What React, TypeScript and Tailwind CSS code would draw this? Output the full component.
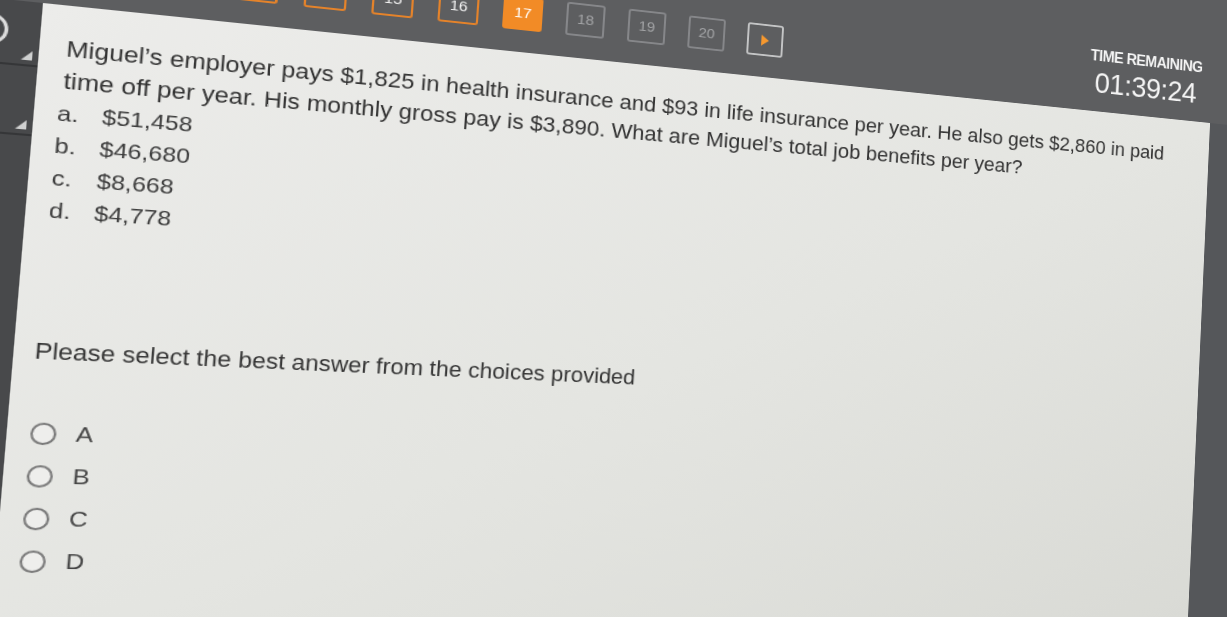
import { useMemo } from "react";

type Pt = [number, number];

// solve a small linear system (gaussian elimination with pivoting)
const solve = (A: number[][], b: number[]) => {
  const n = b.length;
  const M = A.map((row, i) => [...row, b[i]]);
  for (let c = 0; c < n; c++) {
    let p = c;
    for (let r = c + 1; r < n; r++) if (Math.abs(M[r][c]) > Math.abs(M[p][c])) p = r;
    [M[c], M[p]] = [M[p], M[c]];
    for (let r = 0; r < n; r++) {
      if (r === c) continue;
      const f = M[r][c] / M[c][c];
      for (let k = c; k <= n; k++) M[r][k] -= f * M[c][k];
    }
  }
  return M.map((row, i) => row[n] / row[i]);
};

// the photo is taken at an angle, so the flat screen is mapped onto that quad
const perspective = (src: Pt[], dst: Pt[]) => {
  const A: number[][] = [];
  const b: number[] = [];
  for (let i = 0; i < 4; i++) {
    const [x, y] = src[i];
    const [X, Y] = dst[i];
    A.push([x, y, 1, 0, 0, 0, -X * x, -X * y]);
    b.push(X);
    A.push([0, 0, 0, x, y, 1, -Y * x, -Y * y]);
    b.push(Y);
  }
  const [a, bb, c, d, e, f, g, h] = solve(A, b);
  return `matrix3d(${a},${d},0,${g},${bb},${e},0,${h},0,0,1,0,${c},${f},0,1)`;
};

const questions = [11, 12, 13, 14, 15, 16, 17, 18, 19, 20];
const current = 17;

const options = [
  { key: "a.", value: "$51,458" },
  { key: "b.", value: "$46,680" },
  { key: "c.", value: "$8,668" },
  { key: "d.", value: "$4,778" },
];

const NavBox = ({ n }: { n: number }) => {
  if (n === current)
    return (
      <div className="w-[38px] h-[35px] rounded-[3px] bg-[#f28b26] flex items-center justify-center text-[15px] text-white">
        {n}
      </div>
    );
  if (n < current)
    return (
      <div className="w-[38px] h-[35px] rounded-[3px] border-2 border-[#e5832a] flex items-center justify-center text-[15px] text-[#f2f2f2]">
        {n}
      </div>
    );
  return (
    <div className="w-[38px] h-[35px] rounded-[3px] border-2 border-[#86878a] flex items-center justify-center text-[15px] text-[#a3a4a6]">
      {n}
    </div>
  );
};

const Corner = () => (
  <div className="w-0 h-0 border-l-[9px] border-l-transparent border-b-[9px] border-b-[#cfd0d0]" />
);

export default function App() {
  const transform = useMemo(
    () =>
      perspective(
        [
          [60, 160],
          [1240, 160],
          [1240, 740],
          [60, 740],
        ],
        [
          [43, 3],
          [1210, 123],
          [1188, 617],
          [-9, 617],
        ]
      ),
    []
  );

  return (
    <div
      className="relative w-[1227px] h-[617px] overflow-hidden bg-[#57585a]"
      style={{ fontFamily: '"Liberation Sans", Arial, sans-serif' }}
    >
      <div
        className="w-[1320px] h-[800px] flex flex-col bg-[#5d5e60] origin-top-left"
        style={{ transform }}
      >
        {/* top bar */}
        <div className="h-[160px] flex items-start">
          <div className="mt-[102px] ml-[97px] flex gap-[23px]">
            {questions.map((n) => (
              <NavBox key={n} n={n} />
            ))}
            <div className="w-[38px] h-[35px] rounded-[3px] border-2 border-[#c4c5c6] flex items-center justify-center">
              <div className="w-0 h-0 border-y-[6px] border-y-transparent border-l-[8px] border-l-[#f5982f]" />
            </div>
          </div>
          <div className="ml-auto mr-[86px] mt-[87px] w-[150px] flex flex-col items-center text-[#f4f4f4]">
            <div className="text-[17.5px] leading-none font-bold tracking-[-0.7px]">TIME REMAINING</div>
            <div className="mt-[5px] text-[33px] leading-none tracking-[-0.5px]">01:39:24</div>
          </div>
        </div>

        <div className="flex-1 flex">
          {/* side tabs */}
          <div className="w-[60px] bg-[#48494b] flex flex-col">
            <div className="h-[62px] border-b-2 border-[#353638] flex items-end justify-between pr-[5px] pb-[4px]">
              <div className="w-[30px] h-[30px] rounded-full border-[3px] border-[#dcdcdc] ml-[4px] mb-[12px]" />
              <Corner />
            </div>
            <div className="h-[66px] border-b-2 border-[#353638] flex items-end justify-end pr-[5px] pb-[4px]">
              <Corner />
            </div>
          </div>

          {/* question panel */}
          <div className="w-[1180px] h-[640px] bg-gradient-to-br from-[#ececea] via-[#e4e5e1] to-[#d8d9d4] text-[#333333]">
            <div className="pt-[26px] pl-[22px] text-[22px] leading-[31px] whitespace-nowrap">
              Miguel’s employer pays $1,825 in health insurance and $93 in life insurance per year. He also gets $2,860 in paid
              <br />
              time off per year. His monthly gross pay is $3,890. What are Miguel’s total job benefits per year?
            </div>
            <div className="pl-[19px] text-[21px] leading-[31px] text-[#3c3c3c]">
              {options.map((o) => (
                <div key={o.key} className="flex">
                  <span className="w-[37px]">{o.key}</span>
                  <span>{o.value}</span>
                </div>
              ))}
            </div>
            <div className="mt-[104px] pl-[17px] text-[21.5px] leading-[31px] text-[#363636]">
              Please select the best answer from the choices provided
            </div>
            <div className="mt-[41px] pl-[19px] flex flex-col">
              {["A", "B", "C", "D"].map((l) => (
                <div key={l} className="h-[40px] flex items-center">
                  <div className="w-[21px] h-[21px] rounded-full border-2 border-[#7b7b7b] bg-[#eeeeec]" />
                  <span className="ml-[16px] text-[21px] text-[#454545]">{l}</span>
                </div>
              ))}
            </div>
          </div>

          <div className="flex-1 bg-[#55575a]" />
        </div>
      </div>
    </div>
  );
}
